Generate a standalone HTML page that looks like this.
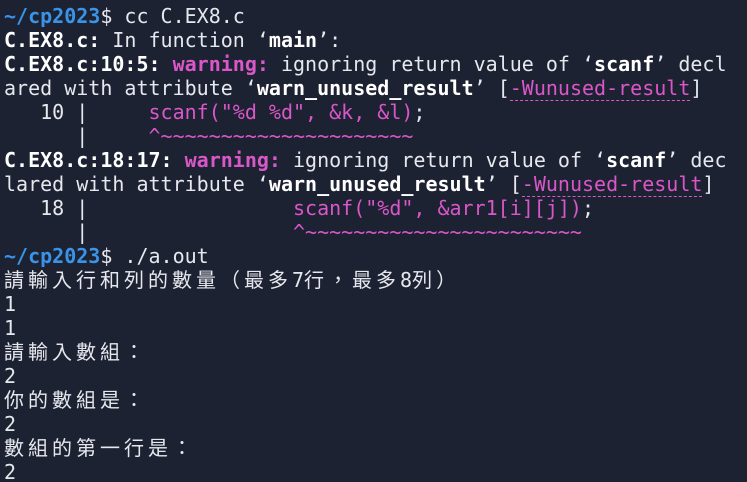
<!DOCTYPE html>
<html><head><meta charset="utf-8"><style>
html,body{margin:0;padding:0;background:#1d2232;width:747px;height:482px;overflow:hidden}
.t{padding:4px 0 0 4px;font-family:"DejaVu Sans Mono","Noto Sans CJK TC",monospace;font-size:20px;color:#e6e8ee}
.t div{height:24px;line-height:24px;overflow:visible;white-space:pre}
.p{color:#3a93e6;font-weight:bold}
.b{font-weight:bold;color:#fff}
.m{color:#d957c8;font-weight:bold}
.mn{color:#d957c8}
.u{color:#d957c8;border-bottom:1px dashed #d957c8}
.c{font-family:"Noto Sans CJK TC","Liberation Sans",sans-serif;letter-spacing:4px;line-height:20px}
</style></head><body><div class="t">
<div><span class="p">~/cp2023</span>$ cc C.EX8.c</div>
<div><span class="b">C.EX8.c:</span> In function ‘<span class="b">main</span>’:</div>
<div><span class="b">C.EX8.c:10:5:</span> <span class="m">warning:</span> ignoring return value of ‘<span class="b">scanf</span>’ decl</div>
<div>ared with attribute ‘<span class="b">warn_unused_result</span>’ [<span class="u">-Wunused-result</span>]</div>
<div>   10 |     <span class="mn">scanf("%d %d", &amp;k, &amp;l)</span>;</div>
<div>      |     <span class="mn">^~~~~~~~~~~~~~~~~~~~~~</span></div>
<div><span class="b">C.EX8.c:18:17:</span> <span class="m">warning:</span> ignoring return value of ‘<span class="b">scanf</span>’ dec</div>
<div>lared with attribute ‘<span class="b">warn_unused_result</span>’ [<span class="u">-Wunused-result</span>]</div>
<div>   18 |                 <span class="mn">scanf("%d", &amp;arr1[i][j])</span>;</div>
<div>      |                 <span class="mn">^~~~~~~~~~~~~~~~~~~~~~~~</span></div>
<div><span class="p">~/cp2023</span>$ ./a.out</div>
<div><span class="c">請輸入行和列的數量（最多</span>7<span class="c">行，最多</span>8<span class="c">列）</span></div>
<div>1</div>
<div>1</div>
<div><span class="c">請輸入數組：</span></div>
<div>2</div>
<div><span class="c">你的數組是：</span></div>
<div>2</div>
<div><span class="c">數組的第一行是：</span></div>
<div>2</div>
</div></body></html>
